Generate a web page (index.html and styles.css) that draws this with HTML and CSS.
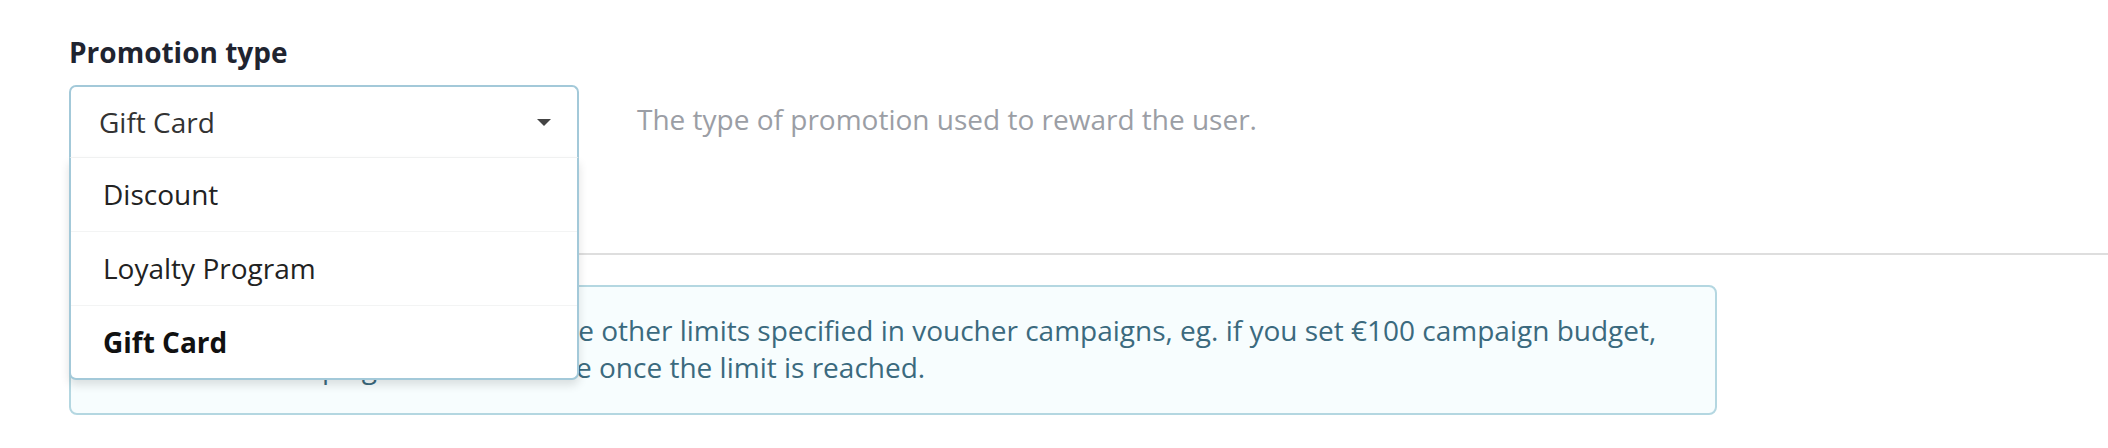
FILE: index.html
```html
<!DOCTYPE html>
<html lang="en">
<head>
<meta charset="utf-8">
<title>Promotion type</title>
<link rel="stylesheet" href="styles.css">
</head>
<body>
<div class="page">
  <div class="field-label">Promotion type</div>
  <div class="field-row">
    <div class="select">
      <div class="select-control">
        <span class="select-value">Gift Card</span>
        <span class="caret"></span>
      </div>
      <ul class="select-menu">
        <li class="option">Discount</li>
        <li class="option">Loyalty Program</li>
        <li class="option selected">Gift Card</li>
      </ul>
    </div>
    <p class="field-help">The type of promotion used to reward the user.</p>
  </div>
  <hr class="divider">
  <div class="info-box">Campaign budget limits overwrite the other limits specified in voucher campaigns, eg. if you set €100 campaign budget, the voucher campaign will be inactive once the limit is reached.</div>
</div>
</body>
</html>
```

FILE: styles.css
```css
html, body {
  margin: 0;
  padding: 0;
  background: #ffffff;
}

body {
  font-family: "Open Sans", "Noto Sans", sans-serif;
  font-size: 28px;
  line-height: 38px;
  color: #333333;
}

.page {
  padding: 33px 0 0 69px;
}

.field-label {
  font-weight: 700;
  color: #1f2430;
  line-height: 38px;
}

.field-row {
  display: flex;
  align-items: flex-start;
  gap: 58px;
  margin-top: 14px;
}

.select {
  position: relative;
  width: 510px;
  flex: none;
}

.select-control {
  box-sizing: border-box;
  display: flex;
  align-items: center;
  justify-content: space-between;
  padding: 16px 26px 16px 28px;
  border: 2px solid #a3c9d9;
  border-bottom: 1px solid #f3f4f4;
  border-radius: 7px 7px 0 0;
  background: #ffffff;
  color: #333333;
}

.caret {
  width: 0;
  height: 0;
  border-left: 7px solid transparent;
  border-right: 7px solid transparent;
  border-top: 7px solid #444444;
}

.select-menu {
  position: absolute;
  top: 100%;
  left: 0;
  right: 0;
  margin: 0;
  padding: 0;
  list-style: none;
  background: #ffffff;
  border: 2px solid #a3c9d9;
  border-top: 0;
  border-radius: 0 0 7px 7px;
  box-shadow: 0 5px 10px rgba(0, 0, 0, 0.12);
  z-index: 5;
}

.option {
  padding: 17px 32px 18px 32px;
  color: #222222;
  border-bottom: 1px solid #f3f4f4;
}

.option:last-child {
  border-bottom: 0;
  padding-bottom: 17px;
}

.option.selected {
  font-weight: 700;
  color: #111111;
}

.field-help {
  margin: 15px 0 0 0;
  color: #9b9ea5;
}

.divider {
  margin: 95px 0 0 0;
  border: 0;
  height: 2px;
  background: #dedede;
}

.info-box {
  box-sizing: border-box;
  width: 1648px;
  margin-top: 30px;
  padding: 25px 30px 27px 33px;
  border: 2px solid #b4d7e1;
  border-radius: 8px;
  background: #f7fdfe;
  color: #3b6a7e;
  line-height: 37px;
}
```
